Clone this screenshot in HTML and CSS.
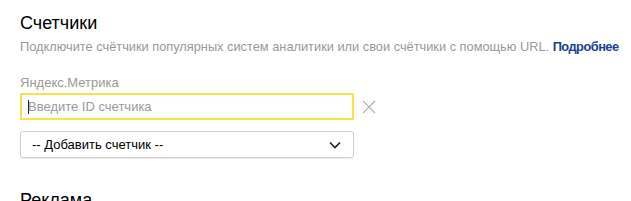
FILE: index.html
```html
<!DOCTYPE html>
<html lang="ru">
<head>
    <meta charset="UTF-8">
    <title>Счетчики</title>
    <link rel="stylesheet" href="styles.css">
</head>
<body>
    <div class="section">
        <h2>Счетчики</h2>
        <p class="hint">Подключите счётчики популярных систем аналитики или свои счётчики с помощью URL. <a href="#">Подробнее</a></p>

        <div class="field">
            <label for="metrikaId">Яндекс.Метрика</label>
            <div class="input-row">
                <div class="input-box">
                    <span class="caret"></span>
                    <input type="text" id="metrikaId" placeholder="Введите ID счетчика">
                </div>
                <button class="clear" title="Удалить">
                    <svg width="14" height="14" viewBox="0 0 14 14"><path d="M1 1L13 13M13 1L1 13" stroke="#b3b3b3" stroke-width="1.2" fill="none"/></svg>
                </button>
            </div>
        </div>

        <div class="select-box">
            <span>-- Добавить счетчик --</span>
            <svg width="12" height="8" viewBox="0 0 12 8"><path d="M1 1.5L6 6.5L11 1.5" stroke="#222" stroke-width="1.6" fill="none"/></svg>
        </div>
    </div>

    <div class="section">
        <h2>Реклама</h2>
    </div>
</body>
</html>
```

FILE: styles.css
```css
body {
    margin: 0;
    padding: 12px 20px 0;
    font-family: "Liberation Sans", Arial, sans-serif;
    background-color: #fff;
    color: #000;
}
.section {
    margin-bottom: 31px;
}
h2 {
    margin: 0;
    font-size: 18px;
    line-height: 22px;
    font-weight: normal;
}
.hint {
    margin: 4px 0 0;
    font-size: 12.8px;
    line-height: 18px;
    color: #999;
    white-space: nowrap;
}
.hint a {
    color: #1a3f92;
    font-weight: bold;
    letter-spacing: -0.5px;
    text-decoration: none;
}
.field {
    margin-top: 18px;
}
.field label {
    display: block;
    font-size: 13px;
    line-height: 18px;
    color: #999;
}
.input-row {
    display: flex;
    align-items: center;
    margin-top: 1px;
}
.input-box {
    position: relative;
    width: 334px;
    height: 27px;
    box-sizing: border-box;
    border: 2px solid #fce14a;
    display: flex;
    align-items: center;
}
.input-box input {
    border: none;
    outline: none;
    width: 100%;
    padding: 0 0 0 6px;
    font-family: inherit;
    font-size: 13px;
    background: transparent;
}
.input-box input::placeholder {
    color: #999;
}
.caret {
    position: absolute;
    left: 6px;
    top: 5px;
    width: 1px;
    height: 14px;
    background-color: #1a2a5a;
}
.clear {
    border: none;
    background: none;
    padding: 0;
    margin-left: 8px;
    width: 14px;
    height: 14px;
    display: flex;
}
.select-box {
    margin-top: 11px;
    width: 334px;
    height: 27px;
    box-sizing: border-box;
    border: 1px solid #d0d0d0;
    border-radius: 3px;
    box-shadow: 0 1px 1px rgba(0,0,0,0.08);
    display: flex;
    align-items: center;
    justify-content: space-between;
    padding: 0 12px 0 11px;
    font-size: 13px;
}
```
